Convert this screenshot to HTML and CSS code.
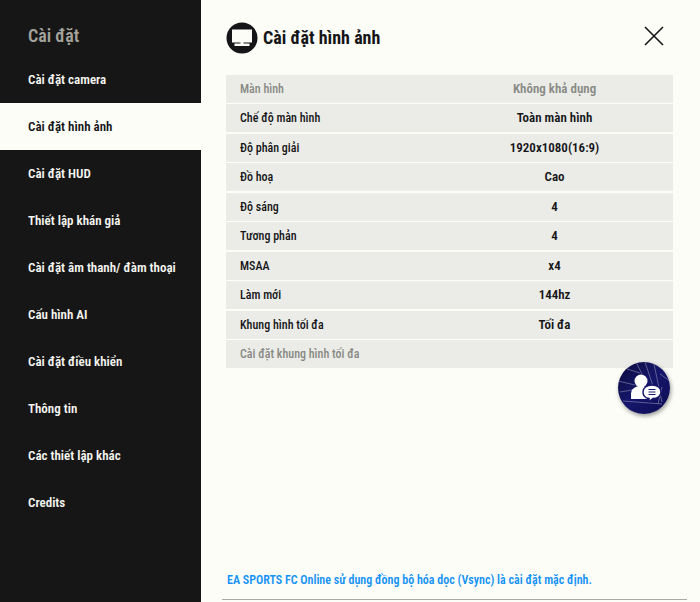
FILE: index.html
```
<!DOCTYPE html>
<html lang="vi">
<head>
	<meta charset="UTF-8">
	<meta name="viewport" content="width=device-width, initial-scale=1">
	<title>Cài đặt hình ảnh</title>
	<link rel="stylesheet" href="styles.css">
</head>
<body>
	<nav class="sidebar">
		<h2>Cài đặt</h2>
		<a href="#camera">Cài đặt camera</a>
		<a href="#display" class="active" aria-current="page">Cài đặt hình ảnh</a>
		<a href="#hud">Cài đặt HUD</a>
		<a href="#crowd">Thiết lập khán giả</a>
		<a href="#audio">Cài đặt âm thanh/ đàm thoại</a>
		<a href="#ai">Cấu hình AI</a>
		<a href="#controls">Cài đặt điều khiển</a>
		<a href="#info">Thông tin</a>
		<a href="#other">Các thiết lập khác</a>
		<a href="#credits">Credits</a>
	</nav>
	<main class="content">
		<header>
			<svg class="title-icon" viewBox="0 0 32 32" aria-hidden="true">
				<circle cx="16" cy="16" r="15.5" fill="#151518"/>
				<path d="M6 7.500h20v13h-8.500v1h6v2.500h-15v-2.500h6v-1h-8.500z" fill="#fcfdf7"/>
			</svg>
			<h1>Cài đặt hình ảnh</h1>
			<button class="close" type="button" aria-label="Đóng">
				<svg viewBox="0 0 20 20" aria-hidden="true">
					<path d="M1 1l18 18M19 1L1 19" fill="none" stroke="#151518" stroke-width="1.6"/>
				</svg>
			</button>
		</header>
		<table class="settings">
			<tbody>
				<tr class="disabled"><th scope="row">Màn hình</th><td>Không khả dụng</td></tr>
				<tr><th scope="row">Chế độ màn hình</th><td>Toàn màn hình</td></tr>
				<tr><th scope="row">Độ phân giải</th><td>1920x1080(16:9)</td></tr>
				<tr><th scope="row">Đồ hoạ</th><td>Cao</td></tr>
				<tr><th scope="row">Độ sáng</th><td>4</td></tr>
				<tr><th scope="row">Tương phản</th><td>4</td></tr>
				<tr><th scope="row">MSAA</th><td>x4</td></tr>
				<tr><th scope="row">Làm mới</th><td>144hz</td></tr>
				<tr><th scope="row">Khung hình tối đa</th><td>Tối đa</td></tr>
				<tr class="disabled"><th scope="row">Cài đặt khung hình tối đa</th><td></td></tr>
			</tbody>
		</table>
		<footer>
			<p>EA SPORTS FC Online sử dụng đồng bộ hóa dọc (Vsync) là cài đặt mặc định.</p>
		</footer>
	</main>
	<button class="support" type="button" aria-label="Hỗ trợ">
		<svg viewBox="0 0 52 52" aria-hidden="true">
			<defs>
				<clipPath id="disc"><circle cx="26" cy="26" r="26"/></clipPath>
				<linearGradient id="navy" x2="1" y2="1">
					<stop offset="0" stop-color="#0a0b3c"/>
					<stop offset=".5" stop-color="#16166c"/>
					<stop offset="1" stop-color="#0d0c50"/>
				</linearGradient>
			</defs>
			<g clip-path="url(#disc)">
				<path d="M0 0h52v52H0z" fill="url(#navy)"/>
				<path d="M18 0l6 12M27 0l8 24M36 2l8 38M0 19l17 4M2 30l12-2M5 39l39 3M42 12l10 7M9 7l13 4M44 25l-4 17" fill="none" stroke="#8e91b5" stroke-width=".6"/>
			</g>
			<circle cx="23" cy="19" r="6.500" fill="#fff"/>
			<path d="M13 37v-5c0-5 4-8 10-8 3 0 5 1 6 2v11z" fill="#fff"/>
			<path d="M34 23c5.500 0 9 3 9 7s-3.500 6.500-8 6.500l-4 3v-3c-4-.5-6-3.500-6-6.500 0-4 3.500-7 9-7z" fill="#fff" stroke="#16166c" stroke-width="1.5"/>
			<path d="M30.500 27.500h7M30.500 30h7M30.500 32.500h7" stroke="#16166c"/>
		</svg>
	</button>
</body>
</html>
```
FILE: styles.css
```
* {
	box-sizing: border-box;
}

body {
	display: flex;
	margin: 0;
	min-height: 100vh;
	background: #fcfdf7;
	color: #151518;
	font-family: "Roboto Condensed", "Liberation Sans Narrow", Roboto, sans-serif;
	font-size: 13px;
}

h1,
h2,
p {
	margin: 0;
}

button {
	padding: 0;
	border: 0;
	background: none;
	cursor: pointer;
}

svg {
	display: block;
	width: 100%;
}

.sidebar {
	flex: none;
	width: 201px;
	background: #161616;
}

.sidebar h2 {
	padding: 14px 28px 0;
	height: 56px;
	color: #a3a39c;
	font-size: 18px;
	font-weight: 600;
	line-height: 44px;
}

.sidebar a {
	display: block;
	padding: 1px 0 0 28px;
	color: #f5f5f0;
	font-weight: 600;
	line-height: 46px;
	text-decoration: none;
	white-space: nowrap;
}

.sidebar a.active {
	background: #fcfdf7;
	color: #151518;
}

.content {
	display: flex;
	flex: 1;
	flex-direction: column;
}

header {
	display: flex;
	align-items: center;
	height: 75px;
	padding: 0 36px 0 25px;
}

.title-icon {
	width: 32px;
	margin-right: 5px;
}

h1 {
	font-size: 18px;
	font-weight: 700;
}

.close {
	width: 20px;
	margin: 0 0 4px auto;
}

.settings {
	margin: 0 27px 0 25px;
	border-collapse: separate;
	border-spacing: 0;
	table-layout: fixed;
}

.settings th,
.settings td {
	height: 29px;
	padding: 0;
	border-bottom: 1px solid #fcfdf7;
	background: #ebece7;
	line-height: 20px;
}

.settings tr:nth-child(even) th,
.settings tr:nth-child(even) td {
	height: 30px;
	border-bottom-width: 2px;
}

.settings th {
	width: 47%;
	padding-left: 14px;
	font-size: 12px;
	font-weight: 500;
	text-align: left;
}

.settings td {
	font-weight: 600;
	text-align: center;
}

.settings .disabled {
	color: #888984;
}

footer {
	margin: auto 13px 2px 21px;
	padding: 0 5px 9px;
	border-bottom: 1px solid #a9aaa6;
	color: #1592f5;
	font-size: 12px;
	font-weight: 600;
	line-height: 20px;
}

/* floating help button */
.support {
	position: fixed;
	right: 30px;
	bottom: 188px;
	width: 52px;
	height: 52px;
	border-radius: 50%;
	box-shadow: 1px 2px 4px #0006;
}
```
